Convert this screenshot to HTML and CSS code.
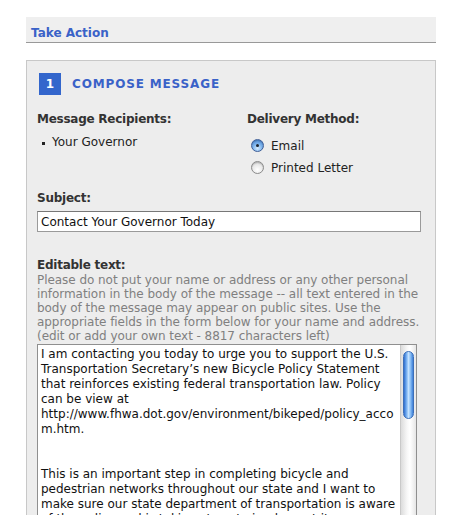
FILE: index.html
```html
<!DOCTYPE html>
<html lang="en">
<head>
<meta charset="utf-8">
<title>Take Action</title>
<link rel="stylesheet" href="styles.css">
</head>
<body>
<div class="page">
  <div class="section-bar"><h2 class="section-title">Take Action</h2></div>
  <div class="panel">
    <div class="step">
      <span class="step-num">1</span>
      <h3 class="step-title">COMPOSE MESSAGE</h3>
    </div>
    <div class="cols">
      <div class="col col-left">
        <div class="label">Message Recipients:</div>
        <ul class="recipients"><li>Your Governor</li></ul>
      </div>
      <div class="col col-right">
        <div class="label">Delivery Method:</div>
        <label class="radio-row"><input type="radio" name="dm" class="radio" checked><span>Email</span></label>
        <label class="radio-row"><input type="radio" name="dm" class="radio"><span>Printed Letter</span></label>
      </div>
    </div>
    <div class="label subject-label">Subject:</div>
    <input class="subject" type="text" value="Contact Your Governor Today">
    <div class="label editable-label">Editable text:</div>
    <p class="hint">Please do not put your name or address or any other personal information in the body of the message -- all text entered in the body of the message may appear on public sites. Use the appropriate fields in the form below for your name and address. (edit or add your own text - 8817 characters left)</p>
    <div class="editor">
      <textarea class="message">I am contacting you today to urge you to support the U.S. Transportation Secretary’s new Bicycle Policy Statement that reinforces existing federal transportation law. Policy can be view at http://www.fhwa.dot.gov/environment/bikeped/policy_accom.htm.


This is an important step in completing bicycle and pedestrian networks throughout our state and I want to make sure our state department of transportation is aware of the policy and is taking steps to implement it.</textarea>
      <div class="scrollbar"><div class="thumb"></div></div>
    </div>
  </div>
</div>
</body>
</html>
```
FILE: styles.css
```css
html, body {
  margin: 0;
  padding: 0;
  background: #ffffff;
}
body {
  font-family: "DejaVu Sans", Verdana, sans-serif;
  font-size: 12px;
  color: #222;
}
.page {
  width: 410px;
  padding: 17px 0 0 26px;
}
.section-bar {
  background: #efefef;
  height: 25px;
  border-bottom: 1px solid #999;
  box-sizing: content-box;
}
.section-title {
  margin: 0;
  padding: 9px 0 0 5px;
  font-size: 12px;
  line-height: 15px;
  font-weight: bold;
  color: #3a62c8;
}
.panel {
  margin-top: 17px;
  border: 1px solid #c8c8c8;
  border-bottom: none;
  background: #ededed;
  padding: 12px 14px 40px 10px;
  height: 500px;
}
.step {
  display: flex;
  align-items: center;
  gap: 11px;
  margin-left: 2px;
}
.step-num {
  width: 22px;
  height: 22px;
  background: #3366cc;
  color: #fff;
  font-weight: bold;
  font-size: 12px;
  line-height: 22px;
  text-align: center;
}
.step-title {
  margin: 0;
  font-size: 12px;
  font-weight: bold;
  letter-spacing: 0.85px;
  color: #3a62c8;
}
.cols {
  display: flex;
  margin-top: 17px;
}
.col-left {
  width: 210px;
}
.label {
  font-weight: bold;
  color: #333;
  font-size: 12px;
  line-height: 15px;
  letter-spacing: -0.25px;
}
.recipients {
  margin: 8px 0 0 0;
  padding: 0 0 0 15px;
  list-style: none;
  line-height: 15px;
}
.recipients li {
  position: relative;
}
.recipients li::before {
  content: "";
  position: absolute;
  left: -10px;
  top: 7px;
  width: 3px;
  height: 3px;
  background: #222;
}
.radio-row {
  display: flex;
  align-items: center;
  gap: 7px;
  margin-left: 4px;
  line-height: 15px;
}
.radio-row:first-of-type {
  margin-top: 12px;
}
.radio-row + .radio-row {
  margin-top: 7px;
}
.radio {
  appearance: none;
  -webkit-appearance: none;
  margin: 0;
  width: 13px;
  height: 13px;
  border-radius: 50%;
  border: 1px solid #8a8a8a;
  background: radial-gradient(circle at 50% 70%, #ffffff 0%, #e8e8e8 55%, #bdbdbd 100%);
  box-shadow: inset 0 1px 1px rgba(0,0,0,0.15);
  position: relative;
  top: -1px;
}
.radio:checked {
  border-color: #3f5f98;
  background: radial-gradient(circle at 50% 75%, #d6ecff 0%, #7cb3ec 45%, #3d7bc9 100%);
}
.radio:checked::after {
  content: "";
  position: absolute;
  left: 4px;
  top: 4px;
  width: 3px;
  height: 3px;
  border-radius: 50%;
  background: #1b2430;
}
.subject-label {
  margin-top: 15px;
}
.subject {
  display: block;
  box-sizing: border-box;
  width: 384px;
  height: 21px;
  margin-top: 5px;
  border: 1px solid #9a9a9a;
  border-top-color: #777;
  background: #fff;
  font-family: "DejaVu Sans", Verdana, sans-serif;
  font-size: 12px;
  color: #111;
  padding: 1px 3px 0;
  outline: none;
}
.editable-label {
  margin-top: 26px;
}
.hint {
  margin: 0;
  color: #808080;
  font-size: 12px;
  line-height: 14px;
  width: 392px;
  letter-spacing: -0.05px;
}
.editor {
  display: flex;
  width: 380px;
  height: 200px;
  margin-top: 1px;
  border: 1px solid #8f8f8f;
  background: #fff;
  box-sizing: border-box;
}
.message {
  flex: 1;
  border: none;
  resize: none;
  overflow: hidden;
  margin: 0;
  padding: 2px 3px;
  font-family: "DejaVu Sans", Verdana, sans-serif;
  font-size: 12px;
  line-height: 15px;
  color: #111;
  background: #fff;
  outline: none;
}
.scrollbar {
  width: 16px;
  background: linear-gradient(to right, #dcdcdc, #f7f7f7 40%, #ffffff 60%, #e6e6e6);
  border-left: 1px solid #c9c9c9;
  padding: 6px 2px 0;
  box-sizing: border-box;
}
.thumb {
  height: 66px;
  border-radius: 6px;
  border: 1px solid #3d6fb8;
  background: linear-gradient(to right, #2f6fd0, #7fb6f3 30%, #c4e2ff 50%, #8fc2f6 70%, #3d7fd8);
}
```
